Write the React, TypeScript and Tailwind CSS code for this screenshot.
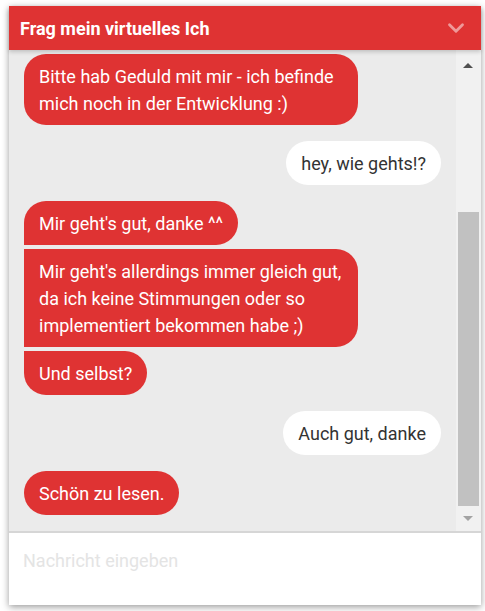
import { ChevronDown } from 'lucide-react';

type Msg = { from: 'bot' | 'me'; text: string; pos?: 'first' | 'mid' | 'last' | 'single' };

const messages: Msg[] = [
  { from: 'bot', text: 'Bitte hab Geduld mit mir - ich befinde mich noch in der Entwicklung :)', pos: 'single' },
  { from: 'me', text: 'hey, wie gehts!?' },
  { from: 'bot', text: "Mir geht's gut, danke ^^", pos: 'first' },
  { from: 'bot', text: "Mir geht's allerdings immer gleich gut, da ich keine Stimmungen oder so implementiert bekommen habe ;)", pos: 'mid' },
  { from: 'bot', text: 'Und selbst?', pos: 'last' },
  { from: 'me', text: 'Auch gut, danke' },
  { from: 'bot', text: 'Schön zu lesen.', pos: 'single' },
];

const corners = {
  single: 'rounded-[22px]',
  first: 'rounded-[22px] rounded-bl-none',
  mid: 'rounded-r-[22px]',
  last: 'rounded-[22px] rounded-tl-none',
};

export default function App() {
  return (
    <div className="min-h-[611px] bg-white pl-[9px] pt-[6px]" style={{ fontFamily: 'Roboto, "Noto Sans", sans-serif' }}>
      <div className="flex w-[472px] flex-col bg-white shadow-[0_2px_7px_rgba(0,0,0,0.4)]">
        <div className="relative z-10 flex h-[44px] items-center justify-between bg-[#df3333] pl-[11px] pr-[12px] shadow-[0_2px_4px_rgba(0,0,0,0.18)]">
          <h1 className="text-[18px] font-bold text-white">Frag mein virtuelles Ich</h1>
          <ChevronDown size={26} strokeWidth={2.6} className="text-white/50" />
        </div>

        <div className="flex h-[481px] bg-[#ebebeb]">
          <div className="flex flex-1 flex-col overflow-hidden px-[15px] pt-[4px]">
            {messages.map((m, i) => {
              const prev = messages[i - 1];
              const gap = i === 0 ? '' : prev.from === m.from ? 'mt-[4px]' : 'mt-[16px]';
              if (m.from === 'me') {
                return (
                  <div key={i} className={`flex justify-end ${gap}`}>
                    <div className="rounded-[22px] bg-white px-[15px] py-[8.5px] text-[18px] leading-[27px] text-[#333333]">
                      {m.text}
                    </div>
                  </div>
                );
              }
              return (
                <div key={i} className={`flex justify-start ${gap}`}>
                  <div className={`max-w-[334px] bg-[#df3333] px-[15px] py-[8.5px] text-[18px] leading-[27px] text-white ${corners[m.pos ?? 'single']}`}>
                    {m.text}
                  </div>
                </div>
              );
            })}
          </div>

          <div className="flex w-[25px] flex-col items-center bg-[#f1f1f1] pr-[1px]">
            <div className="mt-[13px] h-0 w-0 border-x-[5px] border-b-[5px] border-x-transparent border-b-[#505050]" />
            <div className="mt-[144px] h-[294px] w-[21px] bg-[#c1c1c1]" />
            <div className="mt-[10px] h-0 w-0 border-x-[5px] border-t-[5px] border-x-transparent border-t-[#a3a3a3]" />
          </div>
        </div>

        <div className="h-[2px] bg-[#d6d6d6]" />

        <div className="h-[72px] px-[14px] pt-[14px]">
          <input
            placeholder="Nachricht eingeben"
            className="w-full bg-transparent text-[18px] text-[#333333] outline-none placeholder:text-[#e4e4e4]"
          />
        </div>
      </div>
    </div>
  );
}
